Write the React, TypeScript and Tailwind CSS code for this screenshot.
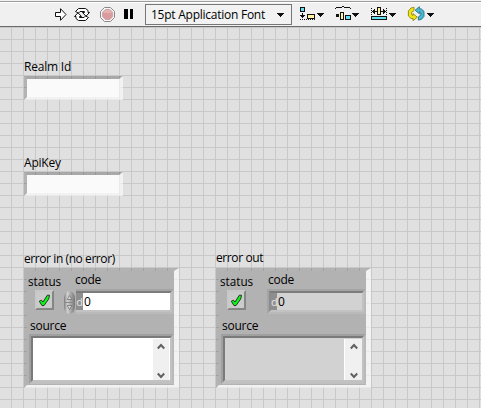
import React from 'react';

const font = "font-['Open_Sans','Noto_Sans',sans-serif]";

function Caret({ className }: { className: string }) {
  return (
    <svg width="8" height="4" viewBox="0 0 8 4" shapeRendering="crispEdges" className={className}>
      <path d="M0 0h7v1H0zM1 1h5v1H1zM2 2h3v1H2zM3 3h1v1H3z" fill="#111" />
    </svg>
  );
}

function Toolbar() {
  return (
    <header className="flex h-[27px] items-start border-b border-[#6b6b6b] bg-[#f0f0f0] shadow-[inset_0_1px_0_#f0f0f0,inset_0_2px_0_#9d9d9a,inset_0_3px_0_#fff]">
      <svg width="92" height="26" viewBox="0 0 92 26" className="shrink-0">
        <path d="M55.5 12.5H60.5V8.7L66 14.5L60.5 20.3V16.5H55.5Z" fill="#fff" stroke="#111" />
        <g fill="#fff" stroke="#111">
          <path d="M75.5 11.5L78.5 8.5H85.5L88 10.5V12.5H89.5L86 16.2L82.5 12.5H84.5V11.5H80L78.5 13Z" />
          <path d="M75.5 11.5L78.5 8.5H85.5L88 10.5V12.5H89.5L86 16.2L82.5 12.5H84.5V11.5H80L78.5 13Z" transform="rotate(180 82 14.5)" />
        </g>
      </svg>
      <svg width="53" height="26" viewBox="92 0 53 26" className="shrink-0">
        <path d="M104.5 7.5H110.5L114.5 11.5V17.5L110.5 21.5H104.5L100.5 17.5V11.5Z" fill="#f8f6f6" stroke="#898989" />
        <path d="M105.5 9.5H109.8L112.7 12.3V16.7L109.8 19.5H105.3L102.5 16.7V12.3Z" fill="#d99b9e" stroke="#cfa6a7" />
        <path d="M105 10h5l2 3h-9z" fill="#e4b2b3" />
        <path d="M124 9h4v10h-4zM130 9h3v10h-3z" fill="#000" />
      </svg>
      <button className="mt-1 flex h-[21px] w-[147px] shrink-0 items-center border border-[#777] bg-[#f2f2f2] pl-[5px] text-left">
        <span className="w-[126px] text-[12px] leading-[18px] tracking-[-0.25px] whitespace-nowrap">15pt Application Font</span>
        <Caret className="shrink-0" />
      </button>
      <svg width="25" height="26" viewBox="292 0 25 26" shapeRendering="crispEdges" className="shrink-0">
        <path d="M300.5 7.5h4v4h-4z" fill="#66e0f0" stroke="#111" />
        <path d="M307.5 14.5h7v4h-7z" fill="#fff3a0" stroke="#111" />
        <path d="M302 13h1v5h-1zM300 15h5v1h-5zM301 16h3v1h-3z" fill="#111" />
        <path d="M300 19.5h15" stroke="#111" strokeDasharray="1 1" />
      </svg>
      <Caret className="mt-[13px] shrink-0" />
      <svg width="27" height="26" viewBox="325 0 27 26" shapeRendering="crispEdges" className="shrink-0">
        <path d="M335 8h1V7h6V6h2v1h6v1h1v1h-1V8h-6V7h-2v1h-6v1h-1z" fill="#111" />
        <path d="M336 14h3v3h-3z" fill="#111" />
        <path d="M340.5 12.5h3v7h-3z" fill="#fff3a0" stroke="#111" />
        <path d="M345.5 15.5h5v4h-5z" fill="#66e0f0" stroke="#111" />
      </svg>
      <Caret className="mt-[13px] shrink-0" />
      <svg width="29" height="26" viewBox="360 0 29 26" shapeRendering="crispEdges" className="shrink-0">
        <path d="M371.5 8v8M386.5 8v8" stroke="#111" strokeDasharray="1 1" />
        <path d="M372 11h5v1h-5zM381 11h5v1h-5zM373 10h1v3h-1zM374 9h1v5h-1zM383 9h1v5h-1zM384 10h1v3h-1z" fill="#111" />
        <path d="M377.5 7.5h3v7h-3z" fill="#fff3a0" stroke="#111" />
        <path d="M371.5 16.5h15v3h-15z" fill="#66e0f0" stroke="#111" />
      </svg>
      <Caret className="mt-[13px] shrink-0" />
      <svg width="30" height="26" viewBox="397 0 30 26" className="shrink-0">
        <path d="M414 7.3L411 8L408.4 11V16L411 18.5H413V20.7L417.3 17.2L413 13.6V15.6L411.6 14.5V12.3L414 10.6Z" fill="#f1e516" stroke="#8f870c" strokeWidth=".9" />
        <path d="M414 7.3L411 8L408.4 11V16L411 18.5H413V20.7L417.3 17.2L413 13.6V15.6L411.6 14.5V12.3L414 10.6Z" transform="rotate(180 416.2 13.7)" fill="#48b7cf" stroke="#217588" strokeWidth=".9" />
      </svg>
      <Caret className="mt-[13px] shrink-0" />
    </header>
  );
}

function TextControl({ label, className }: { label: string; className: string }) {
  return (
    <div className={className}>
      <div className="h-[17px] text-[12px] leading-[15px] tracking-[-0.2px]">{label}</div>
      <div className="h-6 w-[99px] border-t-[3px] border-r-4 border-b-[3px] border-l-[3px] border-t-black/25 border-r-white/60 border-b-white/60 border-l-black/20">
        <div className="h-full bg-[#fafafa]" />
      </div>
    </div>
  );
}

function Check() {
  return (
    <div className="flex h-5 w-[19px] items-center justify-center border-2 border-t-[#c8c8c8] border-r-[#858585] border-b-[#858585] border-l-[#c8c8c8] bg-[#cbcbcb]">
      <svg width="13" height="13" viewBox="0 0 13 13">
        <path d="M1.3 7.2L3.5 6.2L5 8L9.3 1.2H11.5L10.8 4.8L6 11.6H4Z" fill="#0cf514" stroke="#111" strokeWidth=".8" />
      </svg>
    </div>
  );
}

function Spinner() {
  return (
    <svg width="13" height="25" viewBox="0 0 13 25" className="shrink-0">
      <defs>
        <linearGradient id="knob">
          <stop offset="0" stopColor="#7c7c7c" />
          <stop offset=".3" stopColor="#d2d2d2" />
          <stop offset="1" stopColor="#747474" />
        </linearGradient>
      </defs>
      <rect x="1" y="1" width="11" height="23" rx="5.5" ry="8" fill="url(#knob)" />
      <path d="M1.5 12.5H11.5" stroke="#888" />
      <path d="M6.5 5.5L8.8 9.5H4.2Z" fill="#ddd" stroke="#707070" strokeWidth=".8" />
      <path d="M6.5 19.5L8.8 15.5H4.2Z" fill="#ddd" stroke="#707070" strokeWidth=".8" />
    </svg>
  );
}

function ScrollBar({ output }: { output?: boolean }) {
  return (
    <div className={`flex h-[41px] flex-col items-center justify-between bg-[#f0f0f0] pt-[4px] pb-[1px] ${output ? 'w-[18px] border-l border-white' : 'mr-px w-4'}`}>
      <svg width="8" height="7" viewBox="0 0 8 7"><path d="M.8 5.5L4 2L7.2 5.5" fill="none" stroke="#606060" strokeWidth="2" /></svg>
      <svg width="8" height="7" viewBox="0 0 8 7"><path d="M.8 1.5L4 5L7.2 1.5" fill="none" stroke="#606060" strokeWidth="2" /></svg>
    </div>
  );
}

function ErrorCluster({ label, output }: { label: string; output?: boolean }) {
  const fill = output ? 'bg-[#d2d2d2]' : 'bg-white';
  return (
    <section className="w-[155px]">
      <div className={`h-[17px] text-[12px] whitespace-nowrap ${output ? 'leading-[13px] tracking-[-0.4px]' : 'leading-[15px] tracking-[-0.42px]'}`}>{label}</div>
      <div className="h-[120px] border-t-[3px] border-r-[5px] border-b-[3px] border-l-[3px] border-t-black/20 border-r-white/60 border-b-white/60 border-l-black/20">
        <div className="flex h-full flex-col bg-[#b2b2b2] pl-0.5 text-[12px] leading-[17px] tracking-[-0.25px]">
          <div className="flex h-[19px] pt-0.5">
            <span className="-ml-px w-[47px] text-[11.7px] tracking-[0px]">status</span>
            <span className={`-mt-0.5 ${output ? 'pl-px' : 'pl-0'}`}>code</span>
          </div>
          <div className="flex h-[26px] shrink-0">
            <div className={`pl-[6px] ${output ? 'w-[38px]' : 'w-[34px]'}`}><Check /></div>
            {!output && <Spinner />}
            <div className={`-mt-px flex h-[25px] flex-1 border-t-2 border-r-2 border-b-2 border-t-[#a4a4a4] border-r-[#b9b9b9] border-b-[#bababa] ${output ? 'ml-[8px] border-l-2 border-l-[#a4a4a4]' : ''}`}>
              <div className={`flex flex-1 border-t-2 border-r-2 border-b-2 border-t-[#7c7c7c] border-r-[#c2c2c2] border-b-[#c2c2c2] ${output ? 'border-l-2 border-l-[#8b8b8b]' : ''} ${fill}`}>
                <span className={`shrink-0 bg-[#8e8e8e] text-center text-[11px] leading-[17px] text-[#e6e6e6] ${output ? 'w-1.5' : 'w-[7px]'}`}>d</span>
                <span className="pl-px leading-[17px]">0</span>
              </div>
            </div>
          </div>
          <div className="h-[18px] shrink-0 pt-px pl-px">source</div>
          <div className="h-[50px] shrink-0 border-2 border-t-[#a0a0a0] border-r-[#b9b9b9] border-b-[#c0c0c0] border-l-[#a0a0a0]">
            <div className={`flex h-full justify-end border-2 border-t-[#7a7a7a] border-r-[#c2c2c2] border-b-[#c2c2c2] border-l-[#7a7a7a] pt-px ${fill}`}>
              <ScrollBar output={output} />
            </div>
          </div>
        </div>
      </div>
    </section>
  );
}

export default function App() {
  return (
    <div className={`h-[408px] w-[481px] overflow-hidden bg-[#e0e0e0] text-black ${font}`}>
      <Toolbar />
      <main className="h-[381px] bg-[linear-gradient(to_right,#c8c8c8_1px,transparent_1px),linear-gradient(to_bottom,#c8c8c8_1px,transparent_1px)] bg-[size:12px_12px] bg-[position:11px_0px] pt-8 pl-6">
        <TextControl label="Realm Id" className="h-24" />
        <TextControl label="ApiKey" className="h-24" />
        <div className="flex gap-[37px]">
          <ErrorCluster label="error in (no error)" />
          <ErrorCluster label="error out" output />
        </div>
      </main>
    </div>
  );
}
